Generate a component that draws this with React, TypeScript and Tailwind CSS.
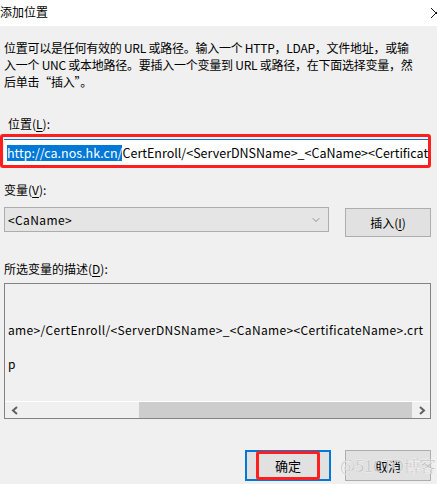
import { ChevronDown } from 'lucide-react'

const font = { fontFamily: '"Noto Sans CJK SC", "Noto Sans", sans-serif' }

const U = ({ children }: { children: string }) => (
  <span className="underline underline-offset-2">{children}</span>
)

export default function App() {
  return (
    <div className="w-[437px] h-[484px] overflow-hidden bg-[#f0f0f0] text-black text-[12px]" style={font}>
      {/* title bar */}
      <div className="h-[26px] bg-white flex items-center justify-between relative">
        <span className="text-[12px] leading-none pl-0 -mt-[2px]">添加位置</span>
        <svg width="10" height="10" viewBox="0 0 10 10" className="absolute left-[431px] top-[8px]">
          <path d="M0 0 L10 10 M10 0 L0 10" stroke="#111" strokeWidth="1" />
        </svg>
      </div>

      <div className="pl-[4px] pt-[13px] leading-[17px] whitespace-nowrap tracking-[-0.25px]">
        <p>位置可以是任何有效的 URL 或路径。输入一个 HTTP，LDAP，文件地址，或输</p>
        <p>入一个 UNC 或本地路径。要插入一个变量到 URL 或路径，在下面选择变量，然</p>
        <p>后单击“插入”。</p>
      </div>

      <div className="mt-[25px] pl-[8px] leading-[17px]">
        位置(<U>L</U>):
      </div>

      <div className="mt-[2px] w-[431px] border-[3px] border-[#ff1f1f] rounded-[3px] pt-[2px] pl-[1px]">
        <div className="h-[26px] bg-white border-t border-[#0078d7] flex items-center pl-[3px] overflow-hidden whitespace-nowrap text-[12.5px]">
          <span className="w-[1px] h-[15px] bg-[#f08020]" />
          <span className="bg-[#0078d7] text-white leading-[16px]">http://ca.nos.hk.cn/</span>
          <span className="leading-[16px]">CertEnroll/&lt;ServerDNSName&gt;_&lt;CaName&gt;&lt;CertificateName&gt;.crt</span>
        </div>
      </div>

      <div className="mt-[13px] pl-[4px] leading-[17px]">
        变量(<U>V</U>):
      </div>

      <div className="mt-[9px] flex items-start px-[4px]">
        <div className="w-[325px] h-[25px] bg-[#e5e5e5] border border-[#adadad] flex items-center justify-between pl-[3px] pr-[6px]">
          <span className="text-[12px] tracking-[0.4px]">&lt;CaName&gt;</span>
          <ChevronDown size={12} strokeWidth={1.2} color="#555" />
        </div>
        <div className="ml-[16px] mt-[1px] w-[86px] h-[29px] bg-[#e1e1e1] border border-[#adadad] flex items-center justify-center">
          插入(<U>I</U>)
        </div>
      </div>

      <div className="mt-[23px] pl-[4px] leading-[17px]">
        所选变量的描述(<U>D</U>):
      </div>

      <div className="mt-[6px] mx-[4px] w-[427px] h-[136px] border border-[#838383] flex flex-col">
        <div className="flex-1 pl-[3px] pt-[37px] leading-[17px] whitespace-nowrap overflow-hidden">
          <div className="tracking-[0.35px]">ame&gt;/CertEnroll/&lt;ServerDNSName&gt;_&lt;CaName&gt;&lt;CertificateName&gt;.crt</div>
          <div className="mt-[17px]">p</div>
        </div>
        <div className="h-[17px] border-t border-white flex items-stretch">
          <div className="w-[18px] flex items-center justify-center">
            <svg width="7" height="9" viewBox="0 0 7 9">
              <path d="M6 1 L2 4.5 L6 8" fill="none" stroke="#606060" strokeWidth="2" />
            </svg>
          </div>
          <div className="flex-1 flex pl-[116px]">
            <div className="w-[273px] bg-[#cdcdcd]" />
          </div>
          <div className="w-[16px] flex items-center justify-center">
            <svg width="7" height="9" viewBox="0 0 7 9">
              <path d="M1 1 L5 4.5 L1 8" fill="none" stroke="#606060" strokeWidth="2" />
            </svg>
          </div>
        </div>
      </div>

      <div className="mt-[31px] flex justify-end pr-[6px] gap-[14px]">
        <div className="w-[86px] h-[31px] border-2 border-[#0078d7] bg-[#e1e1e1] flex items-center justify-center relative">
          <div className="absolute left-[9px] top-[-1px] w-[64px] h-[29px] border-[3px] border-[#ff1f1f] rounded-[3px]" />
          <span className="text-[13px]">确定</span>
        </div>
        <div className="w-[86px] h-[31px] border border-[#adadad] bg-[#e1e1e1] flex items-center justify-center relative">
          <span className="text-[13px]">取消</span>
          <span
            className="absolute left-[-6px] top-[4px] text-[16px] leading-[20px] text-[#b9b9b9] whitespace-nowrap"
            style={{ WebkitTextStroke: '0.3px #ffffff' }}
          >
            @51CTO博客
          </span>
        </div>
      </div>
    </div>
  )
}
